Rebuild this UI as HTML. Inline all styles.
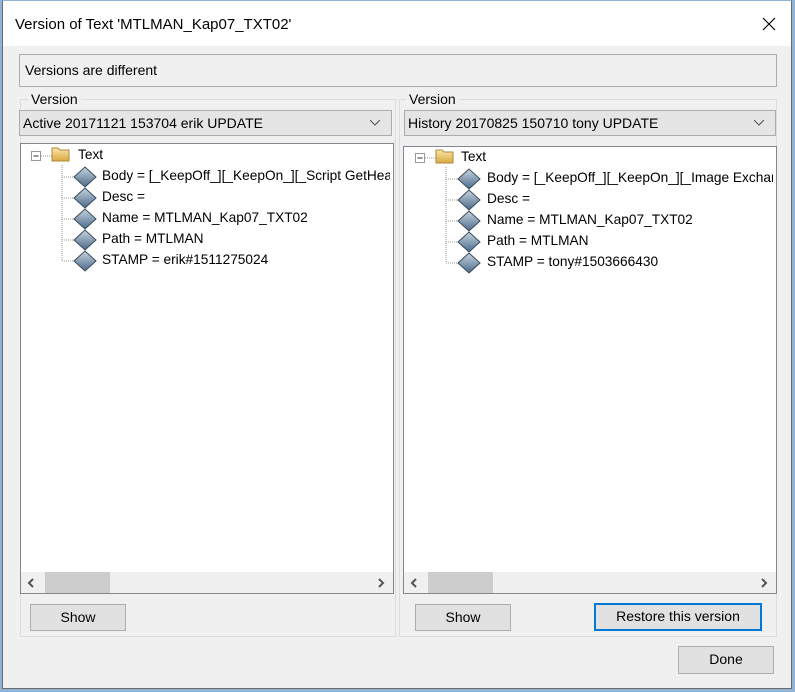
<!DOCTYPE html>
<html><head><style>
*{margin:0;padding:0;box-sizing:border-box}
body{width:795px;height:692px;background:#8fb4d8;font-family:"Liberation Sans",sans-serif;font-size:14px;color:#000;position:relative;overflow:hidden}
.win{position:absolute;left:2px;top:0;width:790px;height:689px;background:#f0f0f0;border:1px solid #6b6b6b;border-top:1px solid #8fb4d8}
.title{position:absolute;left:0;top:0;width:100%;height:45px;background:#fff}
.a{position:absolute}
.box{position:absolute;border:1px solid #adadad}
.grp{position:absolute;border:1px solid #dcdcdc}
.combo{position:absolute;background:#e5e5e5;border:1px solid #acacac;height:26px;line-height:24px;padding-left:3px;white-space:nowrap}
.tree{position:absolute;background:#fff;border:1px solid #828790}
.btn{position:absolute;background:#e1e1e1;border:1px solid #adadad;text-align:center;line-height:24px}
.sb{position:absolute;left:0;right:0;bottom:0;height:21px;background:#f0f0f0}
.row{position:absolute;white-space:nowrap}
</style></head><body>
<div class="win">
<div class="title"></div>
<div class="a" style="left:12px;top:15px;font-size:15px">Version of Text 'MTLMAN_Kap07_TXT02'</div>
<svg class="a" style="left:759px;top:16px" width="14" height="14"><path d="M1 1L13 13M13 1L1 13" stroke="#000" stroke-width="1.2"/></svg>

<div class="box" style="left:16px;top:53px;width:758px;height:33px;"></div>
<div class="a" style="left:22px;top:61px">Versions are different</div>

<!-- left group -->
<div class="grp" style="left:17px;top:98px;width:376px;height:538px"></div>
<div class="a" style="left:25px;top:90px;background:#f0f0f0;padding:0 3px">Version</div>
<div class="combo" style="left:16px;top:109px;width:373px">Active 20171121 153704 erik UPDATE</div>
<svg class="a" style="left:366px;top:118px" width="12" height="8"><path d="M1 1L6 6L11 1" stroke="#555" fill="none"/></svg>
<div class="tree" style="left:17px;top:142px;width:374px;height:451px">
 <div class="sb"><svg class="a" style="left:6px;top:6px" width="8" height="10"><path d="M6 1L2 5L6 9" stroke="#555" stroke-width="2" fill="none"/></svg><div class="a" style="left:24px;top:0;width:65px;height:21px;background:#cdcdcd"></div><svg class="a" style="right:8px;top:6px" width="8" height="10"><path d="M2 1L6 5L2 9" stroke="#555" stroke-width="2" fill="none"/></svg></div>
</div>
<div class="btn" style="left:27px;top:603px;width:96px;height:27px">Show</div>

<!-- right group -->
<div class="grp" style="left:396px;top:98px;width:378px;height:538px"></div>
<div class="a" style="left:403px;top:90px;background:#f0f0f0;padding:0 3px">Version</div>
<div class="combo" style="left:401px;top:109px;width:372px">History 20170825 150710 tony UPDATE</div>
<svg class="a" style="left:750px;top:118px" width="12" height="8"><path d="M1 1L6 6L11 1" stroke="#555" fill="none"/></svg>
<div class="tree" style="left:400px;top:145px;width:374px;height:448px">
 <div class="sb"><svg class="a" style="left:6px;top:6px" width="8" height="10"><path d="M6 1L2 5L6 9" stroke="#555" stroke-width="2" fill="none"/></svg><div class="a" style="left:24px;top:0;width:65px;height:21px;background:#cdcdcd"></div><svg class="a" style="right:8px;top:6px" width="8" height="10"><path d="M2 1L6 5L2 9" stroke="#555" stroke-width="2" fill="none"/></svg></div>
</div>
<div class="btn" style="left:412px;top:603px;width:96px;height:27px">Show</div>
<div class="btn" style="left:591px;top:602px;width:168px;height:28px;border:2px solid #0078d7;line-height:23px">Restore this version</div>
<div class="btn" style="left:675px;top:645px;width:96px;height:28px">Done</div>
</div>

<svg class="a" style="left:0;top:0" width="795" height="692">
<defs>
<linearGradient id="d" x1="0" y1="0" x2="0" y2="1"><stop offset="0" stop-color="#c8d4e0"/><stop offset="1" stop-color="#4a6a8a"/></linearGradient>
<linearGradient id="f" x1="0" y1="0" x2="0" y2="1"><stop offset="0" stop-color="#fbe7a8"/><stop offset="1" stop-color="#d9a940"/></linearGradient>
<g id="dia"><path d="M0 0L11 -10L22 0L11 10Z" fill="url(#d)" stroke="#3a4a5a"/></g>
<g id="fol"><path d="M0 2h6l2 2h9v11H0Z" fill="url(#f)" stroke="#b08a3a"/></g>
<g id="tr">
 <rect x="0.5" y="0.5" width="9" height="9" fill="#fff" stroke="#999"/><path d="M2.5 5h5" stroke="#333"/>
 <path d="M10 5h12" stroke="#999" stroke-dasharray="1 1"/>
 <path d="M31 14V110" stroke="#999" stroke-dasharray="1 1"/>
 <path d="M31 26h12M31 47h12M31 68h12M31 89h12M31 110h12" stroke="#999" stroke-dasharray="1 1"/>
 <use href="#dia" x="43" y="26"/><use href="#dia" x="43" y="47"/><use href="#dia" x="43" y="68"/><use href="#dia" x="43" y="89"/><use href="#dia" x="43" y="110"/>
</g>
</defs>
<use href="#tr" x="31" y="151"/>
<use href="#fol" x="52" y="146"/>
<use href="#tr" x="415" y="153"/>
<use href="#fol" x="436" y="148"/>
</svg>
<div style="position:absolute;left:18px;top:143px;width:372px;height:420px;overflow:hidden;font-size:13.7px">
 <div class="row" style="left:60px;top:4px">Text</div>
 <div class="row" style="left:84px;top:25px">Body = [_KeepOff_][_KeepOn_][_Script GetHead]</div>
 <div class="row" style="left:84px;top:46px">Desc =</div>
 <div class="row" style="left:84px;top:67px">Name = MTLMAN_Kap07_TXT02</div>
 <div class="row" style="left:84px;top:88px">Path = MTLMAN</div>
 <div class="row" style="left:84px;top:109px">STAMP = erik#1511275024</div>
</div>
<div style="position:absolute;left:402px;top:146px;width:371px;height:420px;overflow:hidden;font-size:13.7px">
 <div class="row" style="left:59px;top:3px">Text</div>
 <div class="row" style="left:85px;top:24px">Body = [_KeepOff_][_KeepOn_][_Image Exchange]</div>
 <div class="row" style="left:85px;top:45px">Desc =</div>
 <div class="row" style="left:85px;top:66px">Name = MTLMAN_Kap07_TXT02</div>
 <div class="row" style="left:85px;top:87px">Path = MTLMAN</div>
 <div class="row" style="left:85px;top:108px">STAMP = tony#1503666430</div>
</div>
</body></html>
